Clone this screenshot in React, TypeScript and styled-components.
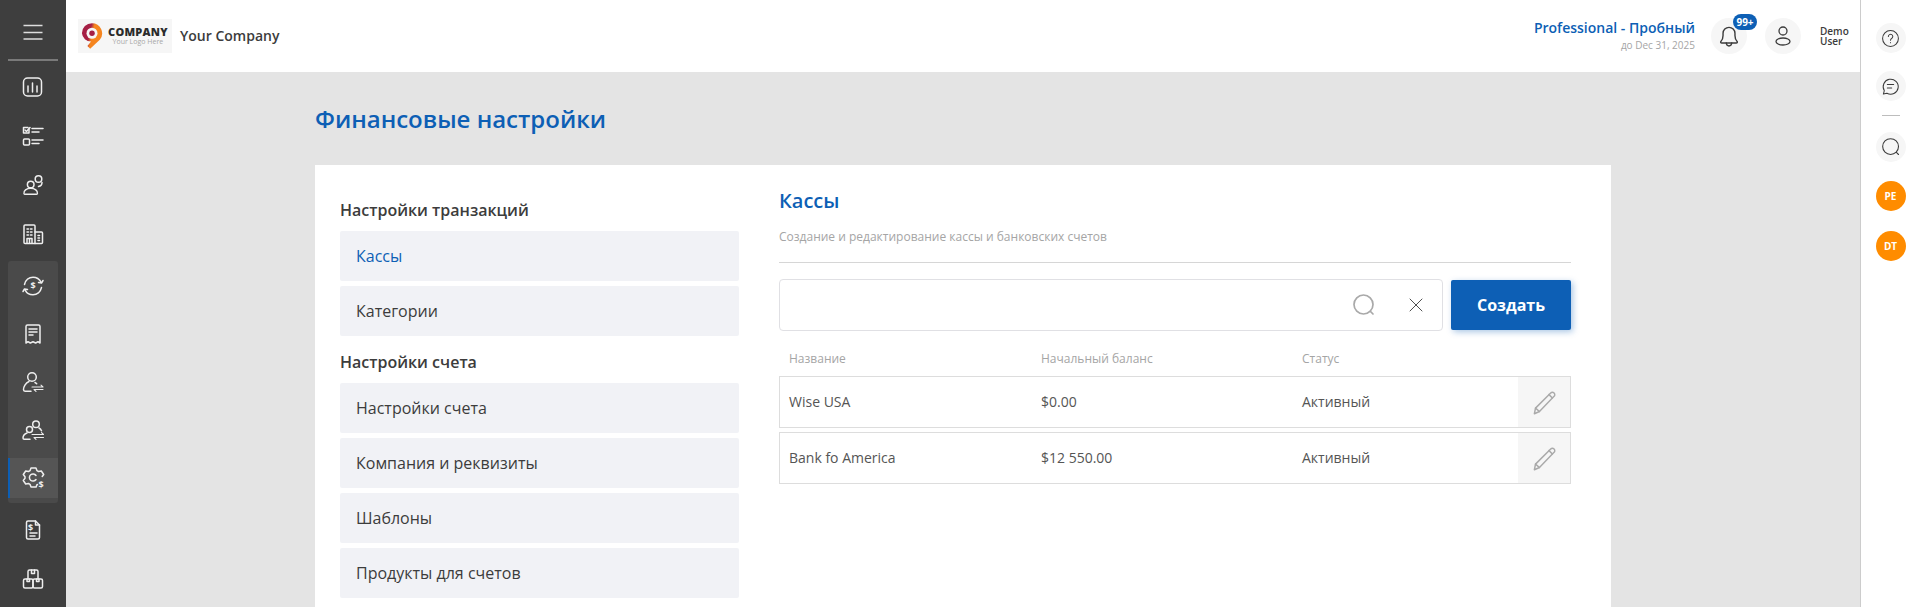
import styled, { createGlobalStyle } from "styled-components";

const GlobalStyle = createGlobalStyle`
  html, body {
    margin: 0;
    padding: 0;
    height: 607px;
    overflow: hidden;
    background: #e4e4e4;
    font-family: "Open Sans", "Liberation Sans", sans-serif;
  }
  * { box-sizing: border-box; }
`;

const BLUE = "#0d5fb5";

const Glyph = styled.svg.attrs({ viewBox: "0 0 24 24", fill: "none", stroke: "currentColor", strokeLinecap: "round", strokeLinejoin: "round" })<{ $size?: number }>`
  display: block;
  width: ${(p) => p.$size ?? 24}px;
  height: ${(p) => p.$size ?? 24}px;
  stroke-width: 1.3;
`;

const DollarMark = styled.text`
  font-family: "Open Sans", sans-serif;
  font-weight: 700;
  font-size: 9px;
  fill: currentColor;
  stroke: none;
  text-anchor: middle;
`;

const ChartIcon = () => (
  <Glyph>
    <rect x="2.5" y="3" width="18" height="18" rx="4" />
    <path d="M7 11v6M11.5 8v9M16 11v6" />
  </Glyph>
);
const TasksIcon = () => (
  <Glyph>
    <path d="M8 5v4H2.5V3.5H7" />
    <path d="M4 6l1.5 1.5L9 3.5" />
    <rect x="2.5" y="15" width="6" height="6" rx="1" />
    <path d="M11 4.5h11M11 8h7M11 16h11M11 19.5h7" />
  </Glyph>
);
const ClientsIcon = () => (
  <Glyph>
    <circle cx="9.7" cy="11.5" r="3.3" />
    <path d="M3 20.5c-.6-2.8 2.5-5.2 6.7-5.2s7.2 2.4 6.7 5.2c-.2.6-.5.7-1 .7H4c-.5 0-.8-.1-1-.7z" />
    <circle cx="17.5" cy="6" r="3.3" />
    <path d="M21 9.500c0 2-1 3.500-3.500 4" />
  </Glyph>
);
const BuildingsIcon = () => (
  <Glyph>
    <path d="M14 21.5H4a1 1 0 0 1-1-1V4a1 1 0 0 1 1-1h9a1 1 0 0 1 1 1z" />
    <path d="M14 10h6.5a1 1 0 0 1 1 1v9.5a1 1 0 0 1-1 1H14" />
    <path d="M6 7h1.5M9.5 7H11M6 10h1.5M9.5 10H11M6 13h1.5M9.5 13H11M6 21v-4.5h5V21M8.5 16.5V21M17 13.5h1.5M17 16h1.5M17 18.5h1.5" />
  </Glyph>
);
const CycleIcon = () => (
  <Glyph>
    <path d="M3.5 10.5C4.5 6 8 3.2 12 3.2c3.500 0 6.500 2 8 5" />
    <path d="M20.500 13.500c-1 4.500-4.500 7.300-8.500 7.300-3.500 0-6.500-2-8-5" />
    <path d="M22 6.500l-1.500 2.500-3-.5M2 17.500l1.500-2.500 3 .5" />
    <DollarMark x="12" y="15.300">$</DollarMark>
  </Glyph>
);
const ReceiptIcon = () => (
  <Glyph>
    <path d="M5 21V4.500A1.500 1.500 0 0 1 6.500 3h11A1.500 1.500 0 0 1 19 4.500V21l-2-1.300-2.300 1.300-2.700-1.300L9.300 21 7 19.700z" />
    <path d="M8 7h8M8 10h8M8 13h4" strokeWidth="1.500" />
  </Glyph>
);
const PersonSwapIcon = () => (
  <Glyph>
    <circle cx="11" cy="7" r="4.300" />
    <path d="M8 11.500C4.500 13 2.500 17 2.500 19.500c0 1 .5 1.700 1.500 1.700h6" />
    <path d="M14 12.500c.8.500 1.200.8 1.700 1.300" />
    <path d="M11 17h11l-2-1.800M22 19.500H13l2 1.800" strokeWidth="1.100" />
  </Glyph>
);
const PeopleSwapIcon = () => (
  <Glyph>
    <circle cx="8.500" cy="11.500" r="3" />
    <circle cx="15" cy="6.300" r="3.300" />
    <path d="M6 15C3.500 16 2 18 2 20c0 .8.500 1.200 1.200 1.200H9" />
    <path d="M18 10c1 .5 2 1.500 2.500 2.700" />
    <path d="M11 16.500h11.500l-2-1.800M22.500 19.500H13l2 1.800" strokeWidth="1.100" />
  </Glyph>
);
const GearMoneyIcon = () => (
  <Glyph>
    <path d="M16.500 18.500l-.7.400-.7 2.100H10l-1-2.700-1.500-.8-2.800.5L2.300 14.500 4 12.300v-1.500L2.300 8.500 4.700 5l2.800.5 1.500-.8L10 2h5l1 2.700 1.500.8 2.800-.5 2.400 3.500-1.500 2" />
    <path d="M15 9.500a3.600 3.600 0 1 0 0 4" />
    <DollarMark x="20" y="21.500">$</DollarMark>
  </Glyph>
);
const DocMoneyIcon = () => (
  <Glyph>
    <path d="M14.500 3H7a1.500 1.500 0 0 0-1.500 1.500v15A1.500 1.500 0 0 0 7 21h10a1.500 1.500 0 0 0 1.500-1.500V7z" />
    <path d="M14.500 3v4h4" />
    <DollarMark x="9.700" y="12.500">$</DollarMark>
    <path d="M9 15h7M9 18h5" strokeWidth="1.500" />
  </Glyph>
);
const BoxesIcon = () => (
  <Glyph>
    <path d="M7 12V4.500A1.500 1.500 0 0 1 8.500 3h7A1.500 1.500 0 0 1 17 4.500V12" />
    <path d="M10.500 3v3.500h3V3" />
    <rect x="2.500" y="12" width="9.500" height="9" rx="1.500" />
    <rect x="12" y="12" width="9.500" height="9" rx="1.500" />
    <path d="M6 12v2.500h2.500V12M15.500 12v2.500H18V12" />
  </Glyph>
);
const MenuIcon = () => (
  <Glyph>
    <path d="M2.500 5.500h19M2.500 12.500h19M2.500 19h19" strokeWidth="1.500" strokeLinecap="butt" />
  </Glyph>
);
const BellIcon = () => (
  <Glyph $size={26}>
    <path d="M4.500 17c1.500-1.500 2-3 2-5.500V9.500a5.500 5.500 0 0 1 11 0v2c0 2.500.5 4 2 5.500 .5.800 0 1.500-.8 1.500H5.300c-.8 0-1.300-.7-.8-1.500z" />
    <path d="M9.500 18.500c.2 1.700 1.200 2.700 2.500 2.700s2.300-1 2.500-2.700" />
  </Glyph>
);
const UserIcon = () => (
  <Glyph>
    <circle cx="12" cy="7" r="4" />
    <ellipse cx="12" cy="17.500" rx="7" ry="3.500" />
  </Glyph>
);
const HelpIcon = () => (
  <Glyph $size={19}>
    <circle cx="12" cy="12" r="10" />
    <path d="M9.300 9.500a2.800 2.800 0 1 1 4.200 2.500c-1 .6-1.500 1.200-1.500 2.300" />
    <path d="M12 17.200v.1" />
  </Glyph>
);
const ChatIcon = () => (
  <Glyph $size={19}>
    <path d="M3 21.500l1.200-4.200A9.500 9.500 0 1 1 7.500 20.500z" />
    <path d="M8 9.500h8M8 14h5.500" />
  </Glyph>
);
const SearchIcon = ({ size }: { size: number }) => (
  <Glyph $size={size}>
    <circle cx="11.500" cy="11.500" r="9.500" />
    <path d="M18.500 18.500l2.500 2.500" />
  </Glyph>
);
const CloseIcon = () => (
  <Glyph $size={16}>
    <path d="M3 3l18 18M21 3L3 21" />
  </Glyph>
);
const PencilIcon = () => (
  <Glyph $size={27}>
    <path d="M3 22l1-5L17.500 3.500a2 2 0 0 1 3 3L7.500 20z" />
    <path d="M4 17l3.500 3M16 5l3 3" />
  </Glyph>
);

function PinLogo() {
  return (
    <svg viewBox="0 0 24 30" width="22" height="28">
      <defs>
        <linearGradient id="pinArc" x1="0" y1="0" x2="1" y2="0.3">
          <stop offset="0.45" stopColor="#a51f45" />
          <stop offset="0.6" stopColor="#f5851f" />
        </linearGradient>
      </defs>
      <path d="M12 1a11 11 0 0 1 8.500 18L10 29l-3-3 4-5a10 10 0 0 1-10-9A11 11 0 0 1 12 1z" fill="url(#pinArc)" />
      <circle cx="12" cy="12" r="6" fill="#f6f6f6" />
      <circle cx="12" cy="12" r="3" fill="#a51f45" />
    </svg>
  );
}

const topNav = [ChartIcon, TasksIcon, ClientsIcon, BuildingsIcon];
const financeNav = [CycleIcon, ReceiptIcon, PersonSwapIcon, PeopleSwapIcon, GearMoneyIcon];
const bottomNav = [DocMoneyIcon, BoxesIcon];

const accounts = [
  { name: "Wise USA", balance: "$0.00", status: "Активный" },
  { name: "Bank fo America", balance: "$12 550.00", status: "Активный" },
];

export default function App() {
  return (
    <Page>
      <GlobalStyle />
      <Sidebar>
        <Burger>
          <MenuIcon />
        </Burger>
        <NavGroup>
          {topNav.map((Icon, i) => (
            <NavItem key={i}>
              <Icon />
            </NavItem>
          ))}
        </NavGroup>
        <FinanceGroup>
          {financeNav.map((Icon, i) => (
            <NavItem key={i} $active={Icon === GearMoneyIcon}>
              <Icon />
            </NavItem>
          ))}
        </FinanceGroup>
        <NavGroup>
          {bottomNav.map((Icon, i) => (
            <NavItem key={i}>
              <Icon />
            </NavItem>
          ))}
        </NavGroup>
      </Sidebar>

      <Center>
        <Header>
          <LogoBox>
            <PinLogo />
            <LogoText>
              <LogoName>COMPANY</LogoName>
              <LogoTag>Your Logo Here</LogoTag>
            </LogoText>
          </LogoBox>
          <CompanyName>Your Company</CompanyName>
          <PlanInfo>
            <PlanName>Professional - Пробный</PlanName>
            <PlanDate>до Dec 31, 2025</PlanDate>
          </PlanInfo>
          <HeaderCircle>
            <BellIcon />
            <Badge>99+</Badge>
          </HeaderCircle>
          <HeaderCircle>
            <UserIcon />
          </HeaderCircle>
          <UserName>
            <UserLine>Demo</UserLine>
            <UserLine>User</UserLine>
          </UserName>
        </Header>

        <Main>
          <PageTitle>Финансовые настройки</PageTitle>
          <Card>
            <SettingsNav>
              <NavHeading>Настройки транзакций</NavHeading>
              <MenuList>
                <MenuItem $active>Кассы</MenuItem>
                <MenuItem>Категории</MenuItem>
              </MenuList>
              <NavHeading>Настройки счета</NavHeading>
              <MenuList>
                <MenuItem>Настройки счета</MenuItem>
                <MenuItem>Компания и реквизиты</MenuItem>
                <MenuItem>Шаблоны</MenuItem>
                <MenuItem>Продукты для счетов</MenuItem>
              </MenuList>
            </SettingsNav>

            <Content>
              <ContentTitle>Кассы</ContentTitle>
              <ContentHint>Создание и редактирование кассы и банковских счетов</ContentHint>
              <Toolbar>
                <SearchBox>
                  <SearchGlass>
                    <SearchIcon size={24} />
                  </SearchGlass>
                  <SearchClear>
                    <CloseIcon />
                  </SearchClear>
                </SearchBox>
                <CreateButton>Создать</CreateButton>
              </Toolbar>
              <TableHead>
                <span>Название</span>
                <span>Начальный баланс</span>
                <span>Статус</span>
              </TableHead>
              <Rows>
                {accounts.map((a) => (
                  <Row key={a.name}>
                    <RowText>{a.name}</RowText>
                    <RowText>{a.balance}</RowText>
                    <RowText>{a.status}</RowText>
                    <EditCell>
                      <PencilIcon />
                    </EditCell>
                  </Row>
                ))}
              </Rows>
            </Content>
          </Card>
        </Main>
      </Center>

      <Rail>
        <RailButton>
          <HelpIcon />
        </RailButton>
        <RailButton>
          <ChatIcon />
        </RailButton>
        <RailDivider />
        <RailButton>
          <SearchIcon size={20} />
        </RailButton>
        <Avatar>PE</Avatar>
        <Avatar>DT</Avatar>
      </Rail>
    </Page>
  );
}

const Page = styled.div`
  display: flex;
  height: 607px;
  overflow: hidden;
`;

const Sidebar = styled.aside`
  flex: 0 0 66px;
  display: flex;
  flex-direction: column;
  gap: 7px;
  padding: 0 8px;
  background: #3e3e3e;
  color: #eeeeee;
`;

const Burger = styled.div`
  display: flex;
  justify-content: center;
  align-items: center;
  height: 61px;
  padding-top: 5px;
  margin-bottom: -1px;
  border-bottom: 2px solid #7a7a7a;
  color: #dddddd;
`;

const NavGroup = styled.div`
  display: flex;
  flex-direction: column;
  gap: 9px;
`;

const FinanceGroup = styled.div`
  display: flex;
  flex-direction: column;
  gap: 8px;
  padding: 5px 0;
  background: #4a4a4a;
  border-radius: 3px;
`;

const NavItem = styled.div<{ $active?: boolean }>`
  display: flex;
  align-items: center;
  justify-content: center;
  height: 40px;
  background: ${(p) => (p.$active ? "#555555" : "transparent")};
  border-left: 2px solid ${(p) => (p.$active ? BLUE : "transparent")};
  padding-right: 2px;

  svg {
    stroke-width: 1.5;
  }
`;

const Center = styled.div`
  flex: 1;
  min-width: 0;
  display: flex;
  flex-direction: column;
`;

const Header = styled.header`
  flex: 0 0 72px;
  display: flex;
  align-items: center;
  padding: 0 0 0 12px;
  background: #ffffff;
`;

const LogoBox = styled.div`
  display: flex;
  align-items: center;
  gap: 5px;
  width: 94px;
  height: 34px;
  padding-left: 3px;
  background: #f6f6f6;
`;

const LogoText = styled.div`
  display: flex;
  flex-direction: column;
  align-items: center;
`;

const LogoName = styled.span`
  font-size: 11px;
  line-height: 11px;
  font-weight: 800;
  letter-spacing: 0.25px;
  color: #2b2b2b;
`;

const LogoTag = styled.span`
  font-size: 7px;
  line-height: 10px;
  color: #a8a8a8;
`;

const CompanyName = styled.div`
  margin: 0 0 2px 8px;
  font-size: 14px;
  font-weight: 600;
  color: #3c3c3c;
`;

const PlanInfo = styled.div`
  margin-left: auto;
  padding-bottom: 3px;
  display: flex;
  flex-direction: column;
  align-items: flex-end;
`;

const PlanName = styled.span`
  font-size: 14px;
  line-height: 20px;
  font-weight: 600;
  color: ${BLUE};
`;

const PlanDate = styled.span`
  font-size: 10px;
  line-height: 14px;
  color: #a5a5a5;
`;

const HeaderCircle = styled.div`
  position: relative;
  display: flex;
  align-items: center;
  justify-content: center;
  width: 36px;
  height: 36px;
  margin-left: 16px;
  border-radius: 50%;
  background: #f6f6f6;
  color: #3c3c3c;

  & + & {
    margin-left: 18px;
  }
`;

const Badge = styled.span`
  position: absolute;
  top: -4px;
  left: 22px;
  width: 24px;
  height: 16px;
  border-radius: 8px;
  background: ${BLUE};
  color: #ffffff;
  font-size: 10px;
  font-weight: 700;
  line-height: 16px;
  text-align: center;
`;

const UserName = styled.div`
  margin-left: 19px;
  width: 40px;
  display: flex;
  flex-direction: column;
  gap: 3px;
`;

const UserLine = styled.span`
  display: block;
  height: 7px;
  font-size: 10px;
  line-height: 7px;
  font-weight: 600;
  color: #3c3c3c;
`;

const Main = styled.main`
  flex: 1;
  min-height: 0;
  padding: 0 249px;
  background: #e4e4e4;
`;

const PageTitle = styled.h1`
  margin: 0;
  height: 93px;
  padding-top: 30px;
  font-size: 24px;
  line-height: 34px;
  font-weight: 600;
  color: ${BLUE};
`;

const Card = styled.section`
  display: flex;
  gap: 40px;
  height: 500px;
  padding: 32px 40px 0 25px;
  background: #ffffff;
`;

const SettingsNav = styled.nav`
  flex: 0 0 399px;
`;

const NavHeading = styled.h3`
  margin: 0;
  height: 34px;
  font-size: 16px;
  line-height: 26px;
  font-weight: 600;
  color: #3c3c3c;
`;

const MenuList = styled.div`
  display: flex;
  flex-direction: column;
  gap: 5px;
  margin-bottom: 13px;
`;

const MenuItem = styled.div<{ $active?: boolean }>`
  height: 50px;
  padding-left: 16px;
  border-radius: 2px;
  background: #f1f2f6;
  font-size: 16px;
  line-height: 50px;
  color: ${(p) => (p.$active ? BLUE : "#3c3c3c")};
`;

const Content = styled.div`
  flex: 1;
  min-width: 0;
`;

const ContentTitle = styled.h2`
  margin: -10px 0 0;
  font-size: 20px;
  line-height: 28px;
  font-weight: 600;
  color: ${BLUE};
`;

const ContentHint = styled.p`
  margin: 0;
  height: 48px;
  padding-top: 13px;
  border-bottom: 1px solid #d6d6d6;
  font-size: 12px;
  line-height: 18px;
  color: #a5a5a5;
`;

const Toolbar = styled.div`
  display: flex;
  gap: 8px;
  align-items: center;
  margin-top: 16px;
`;

const SearchBox = styled.div`
  flex: 1;
  position: relative;
  height: 52px;
  border: 1px solid #e0e0e4;
  border-radius: 4px;
  background: #ffffff;
`;

const SearchGlass = styled.span`
  position: absolute;
  top: 13px;
  right: 66px;
  color: #a9a9a9;

  svg {
    stroke-width: 1.7;
  }
`;

const SearchClear = styled.span`
  position: absolute;
  top: 17px;
  right: 18px;
  color: #333333;
`;

const CreateButton = styled.button`
  flex: 0 0 120px;
  height: 50px;
  border: 0;
  border-radius: 2px;
  background: ${BLUE};
  box-shadow: 2px 2px 6px rgba(13, 95, 181, 0.35);
  color: #ffffff;
  font-family: inherit;
  font-size: 16px;
  font-weight: 700;
`;

const TableHead = styled.div`
  display: grid;
  grid-template-columns: 252px 261px 1fr;
  align-items: center;
  height: 45px;
  padding: 9px 10px 0;
  font-size: 12px;
  color: #a5a5a5;
`;

const Rows = styled.div`
  display: flex;
  flex-direction: column;
  gap: 4px;
`;

const Row = styled.div`
  display: grid;
  grid-template-columns: 252px 261px 1fr 52px;
  align-items: center;
  height: 52px;
  padding-left: 9px;
  border: 1px solid #dddddd;
  font-size: 14px;
  color: #555555;
`;

const RowText = styled.span`
  margin-bottom: 2px;
`;

const EditCell = styled.div`
  display: flex;
  align-items: center;
  justify-content: center;
  height: 100%;
  background: #f6f6f6;
  color: #aaaaaa;
`;

const Rail = styled.aside`
  flex: 0 0 59px;
  display: flex;
  flex-direction: column;
  align-items: center;
  padding: 23px 0 0 1px;
  background: #ffffff;
  border-left: 1px solid #cccccc;
`;

const RailButton = styled.div`
  display: flex;
  align-items: center;
  justify-content: center;
  flex: 0 0 30px;
  width: 30px;
  margin-bottom: 18px;
  border-radius: 50%;
  background: #f6f6f6;
  color: #3c3c3c;
`;

const RailDivider = styled.div`
  width: 18px;
  height: 1px;
  margin: -4px 0 16px;
  background: #bdbdbd;
`;

const Avatar = styled.div`
  flex: 0 0 30px;
  width: 30px;
  margin: 1px 0 19px;
  border-radius: 50%;
  background: #ff8c00;
  color: #ffffff;
  font-size: 10px;
  font-weight: 700;
  line-height: 30px;
  text-align: center;
`;
